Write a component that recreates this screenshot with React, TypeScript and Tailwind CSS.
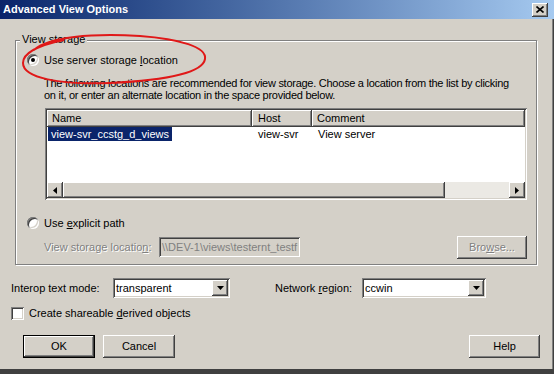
import * as React from "react";

const raised =
  "shadow-[inset_-1px_-1px_#404040,inset_1px_1px_#ffffff,inset_-2px_-2px_#808080,inset_2px_2px_#d4d0c8]";
const sunken =
  "shadow-[inset_1px_1px_#808080,inset_-1px_-1px_#ffffff,inset_2px_2px_#404040,inset_-2px_-2px_#d4d0c8]";
const disabledText = "text-[#808080] [text-shadow:1px_1px_0_#ffffff]";

function Radio({ checked }: { checked?: boolean }) {
  return (
    <span className={`flex h-[12px] w-[12px] shrink-0 items-center justify-center rounded-full bg-white ${sunken}`}>
      {checked ? <span className="h-[4px] w-[4px] rounded-full bg-black" /> : null}
    </span>
  );
}

function Accel({ children }: { children: React.ReactNode }) {
  return <span className="underline underline-offset-[1px]">{children}</span>;
}

function DownArrow() {
  return (
    <svg width="7" height="4" viewBox="0 0 7 4">
      <path d="M0 0h7L3.5 4z" fill="#000" />
    </svg>
  );
}

function Select({ value, width }: { value: string; width: string }) {
  return (
    <div className={`flex h-[20px] items-center bg-white p-[2px] ${sunken} ${width}`}>
      <span className="flex-1 pl-[1px]">{value}</span>
      <span className={`flex h-[16px] w-[16px] items-center justify-center bg-[#d4d0c8] ${raised}`}>
        <DownArrow />
      </span>
    </div>
  );
}

function Button({ label, isDefault, width, className = "" }: { label: React.ReactNode; isDefault?: boolean; width: string; className?: string }) {
  return (
    <div className={`h-[23px] ${width} ${isDefault ? "border border-black" : ""} ${className}`}>
      <div className={`flex h-full w-full items-center justify-center ${raised}`}>{label}</div>
    </div>
  );
}

export default function App() {
  return (
    <div className="relative flex h-[374px] w-[554px] flex-col overflow-hidden bg-[#d4d0c8] font-['Liberation_Sans',Arial,sans-serif] text-[11px] leading-[13px] text-black shadow-[inset_-1px_-1px_#404040,inset_-2px_-2px_#808080]">
      {/* title bar */}
      <div className="flex h-[19px] shrink-0 items-center justify-between bg-linear-to-r from-[#0a246a] to-[#a6caf0] pl-[3px] pr-[6px]">
        <span className="text-[11px] font-bold text-white">Advanced View Options</span>
        <span className={`flex h-[14px] w-[16px] items-center justify-center bg-[#d4d0c8] ${raised}`}>
          <svg width="8" height="7" viewBox="0 0 8 7">
            <path d="M0.5 0.5l7 6M7.5 0.5l-7 6" stroke="#000" strokeWidth="1.6" />
          </svg>
        </span>
      </div>

      {/* View storage group */}
      <div className="relative ml-[15px] mt-[21px] h-[225px] w-[522px] shrink-0 border border-[#808080] shadow-[inset_1px_1px_#ffffff,1px_1px_#ffffff]">
        <span className="absolute -top-[8px] left-[4px] bg-[#d4d0c8] px-[2px]">View storage</span>
        <div className="flex flex-col pt-[11px]">
          <div className="flex h-[16px] items-center gap-[5px] pl-[11px]">
            <Radio checked />
            <span>
              Use server storage <Accel>l</Accel>ocation
            </span>
          </div>
          <p className="mt-[9px] whitespace-nowrap pl-[28px] leading-[12px] tracking-[-0.27px]">
            The following locations are recommended for view storage. Choose a location from the list by clicking
            <br />
            on it, or enter an alternate location in the space provided below.
          </p>

          <div className={`ml-[29px] mt-[7px] flex h-[92px] w-[482px] flex-col bg-white p-[2px] ${sunken}`}>
            <div className="flex h-[17px] shrink-0 bg-[#d4d0c8]">
              <div className={`flex w-[205px] items-center pl-[5px] ${raised}`}>Name</div>
              <div className={`flex w-[60px] items-center pl-[6px] ${raised}`}>Host</div>
              <div className={`flex flex-1 items-center pl-[5px] ${raised}`}>Comment</div>
            </div>
            <div className="flex h-[15px] items-center">
              <div className="w-[205px] pl-[1px]">
                <span className="bg-[#0a246a] px-[3px] py-[1px] text-white">view-svr_ccstg_d_views</span>
              </div>
              <div className="w-[60px] pl-[6px]">view-svr</div>
              <div className="flex-1 pl-[6px]">View server</div>
            </div>
            <div className="flex-1" />
            <div className="flex h-[16px] shrink-0">
              <span className={`flex w-[16px] items-center justify-center bg-[#d4d0c8] ${raised}`}>
                <svg width="4" height="7" viewBox="0 0 4 7">
                  <path d="M4 0v7L0 3.5z" fill="#000" />
                </svg>
              </span>
              <span className={`w-[382px] bg-[#d4d0c8] ${raised}`} />
              <span className="flex-1 bg-[#ebe9e4]" />
              <span className={`flex w-[16px] items-center justify-center bg-[#d4d0c8] ${raised}`}>
                <svg width="4" height="7" viewBox="0 0 4 7">
                  <path d="M0 0v7L4 3.5z" fill="#000" />
                </svg>
              </span>
            </div>
          </div>

          <div className="mt-[15px] flex h-[16px] items-center gap-[5px] pl-[11px]">
            <Radio />
            <span>
              Use <Accel>e</Accel>xplicit path
            </span>
          </div>

          <div className="mt-[5px] flex h-[22px] items-center pl-[28px] pr-[9px]">
            <span className={`w-[115px] shrink-0 ${disabledText}`}>
              View storage locatio<Accel>n</Accel>:
            </span>
            <div className={`flex h-[20px] w-[141px] items-center overflow-hidden whitespace-nowrap bg-[#d4d0c8] pl-[3px] text-[#808080] ${sunken}`}>
              {"\\\\DEV-1\\views\\testernt_testf"}
            </div>
            <Button
              width="w-[70px]"
              className="ml-auto h-[22px]"
              label={
                <span className={disabledText}>
                  Bro<Accel>w</Accel>se...
                </span>
              }
            />
          </div>
        </div>
      </div>

      {/* interop / network row */}
      <div className="mt-[13px] flex h-[20px] items-center pl-[11px]">
        <span className="w-[102px] shrink-0">Interop text mode:</span>
        <Select value="transparent" width="w-[117px]" />
        <span className="ml-[45px] w-[87px] shrink-0">
          Network <Accel>r</Accel>egion:
        </span>
        <Select value="ccwin" width="w-[124px]" />
      </div>

      <div className="mt-[9px] flex h-[13px] items-center gap-[5px] pl-[11px]">
        <span className={`h-[13px] w-[13px] bg-white ${sunken}`} />
        <span>
          Create shareable <Accel>d</Accel>erived objects
        </span>
      </div>

      <div className="mt-[15px] flex pl-[23px] pr-[14px]">
        <Button label="OK" isDefault width="w-[72px]" />
        <Button label="Cancel" width="w-[72px]" className="ml-[8px]" />
        <Button label="Help" width="w-[71px]" className="ml-auto" />
      </div>

      <div className="mt-auto h-[5px] bg-[#404040]" />

      {/* red annotation */}
      <svg className="pointer-events-none absolute left-0 top-0" width="554" height="374" viewBox="0 0 554 374">
        <path
          d="M34 50 C48 37 92 33 140 36 C180 39 207 47 205 59 C203 72 170 80 110 83 C60 85 23 78 23 63 C23 55 34 46 64 40"
          fill="none"
          stroke="#e01818"
          strokeWidth="2"
        />
      </svg>
    </div>
  );
}
